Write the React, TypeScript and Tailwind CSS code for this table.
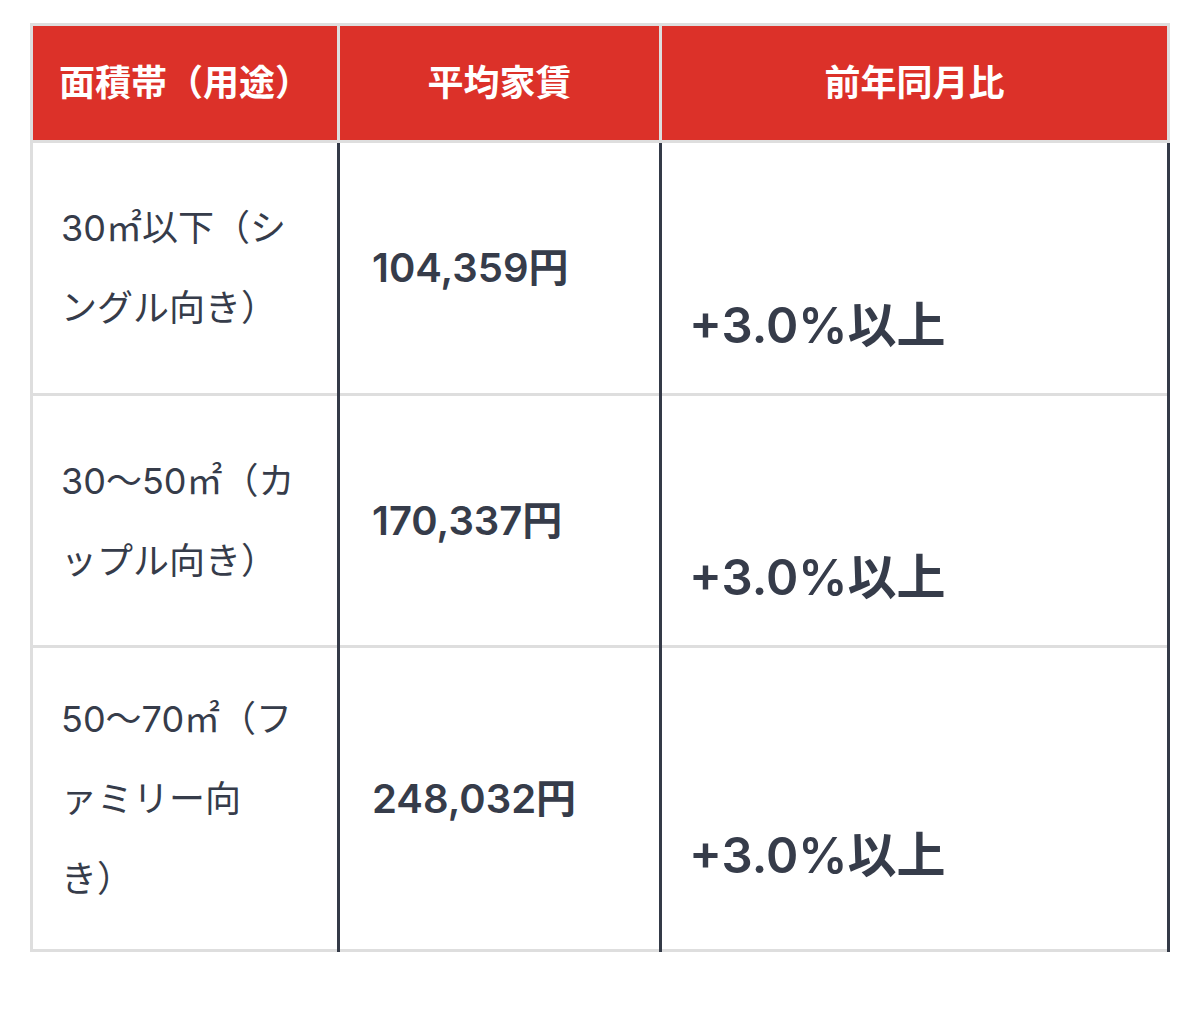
import React from "react";

const rows = [
  { area: ["30㎡以下（シ", "ングル向き）"], rent: "104,359円", yoy: "+3.0%以上", h: "h-[253px]" },
  { area: ["30〜50㎡（カ", "ップル向き）"], rent: "170,337円", yoy: "+3.0%以上", h: "h-[252px]" },
  { area: ["50〜70㎡（フ", "ァミリー向", "き）"], rent: "248,032円", yoy: "+3.0%以上", h: "h-[304px]" },
];

export default function App() {
  return (
    <div
      className="w-[1200px] h-[1018px] bg-white pt-[23px] pl-[30px]"
      style={{ fontFamily: 'Inter, "Noto Sans CJK JP", "Noto Sans", sans-serif' }}
    >
      <div className="w-[1140px] border-l-[3px] border-t-[3px] border-[#dedede]">
        {/* header */}
        <div className="flex h-[117px]">
          <div className="w-[307px] h-full bg-[#dc3129] border-r-[3px] border-b-[3px] border-[#dedede] flex items-center pl-[26px] text-white text-[36px] font-bold">
            面積帯（用途）
          </div>
          <div className="w-[322px] h-full bg-[#dc3129] border-r-[3px] border-b-[3px] border-[#dedede] flex items-center justify-center text-white text-[36px] font-bold">
            平均家賃
          </div>
          <div className="w-[508px] h-full bg-[#dc3129] border-r-[3px] border-b-[3px] border-[#dedede] flex items-center justify-center text-white text-[36px] font-bold">
            前年同月比
          </div>
        </div>
        {/* body */}
        <div className="flex text-[#363c4a]">
          <div className="w-[307px] border-r-[3px] border-[#343a47] flex flex-col">
            {rows.map((r, i) => (
              <div
                key={i}
                className={`${r.h} border-b-[3px] border-[#dedede] flex items-center pl-[28px]`}
              >
                <div className="text-[36px] leading-[80px] font-normal">
                  {r.area.map((l, j) => (
                    <div key={j} className="whitespace-nowrap">{l}</div>
                  ))}
                </div>
              </div>
            ))}
          </div>
          <div className="w-[322px] border-r-[3px] border-[#343a47] flex flex-col">
            {rows.map((r, i) => (
              <div
                key={i}
                className={`${r.h} border-b-[3px] border-[#dedede] flex items-center pl-[32px]`}
              >
                <div className="text-[40px] font-semibold leading-none">{r.rent}</div>
              </div>
            ))}
          </div>
          <div className="w-[508px] border-r-[3px] border-[#343a47] flex flex-col">
            {rows.map((r, i) => (
              <div
                key={i}
                className={`${r.h} border-b-[3px] border-[#dedede] flex items-center pl-[27px]`}
              >
                <div className="pt-[114px] text-[49px] font-semibold leading-none">{r.yoy}</div>
              </div>
            ))}
          </div>
        </div>
      </div>
    </div>
  );
}
